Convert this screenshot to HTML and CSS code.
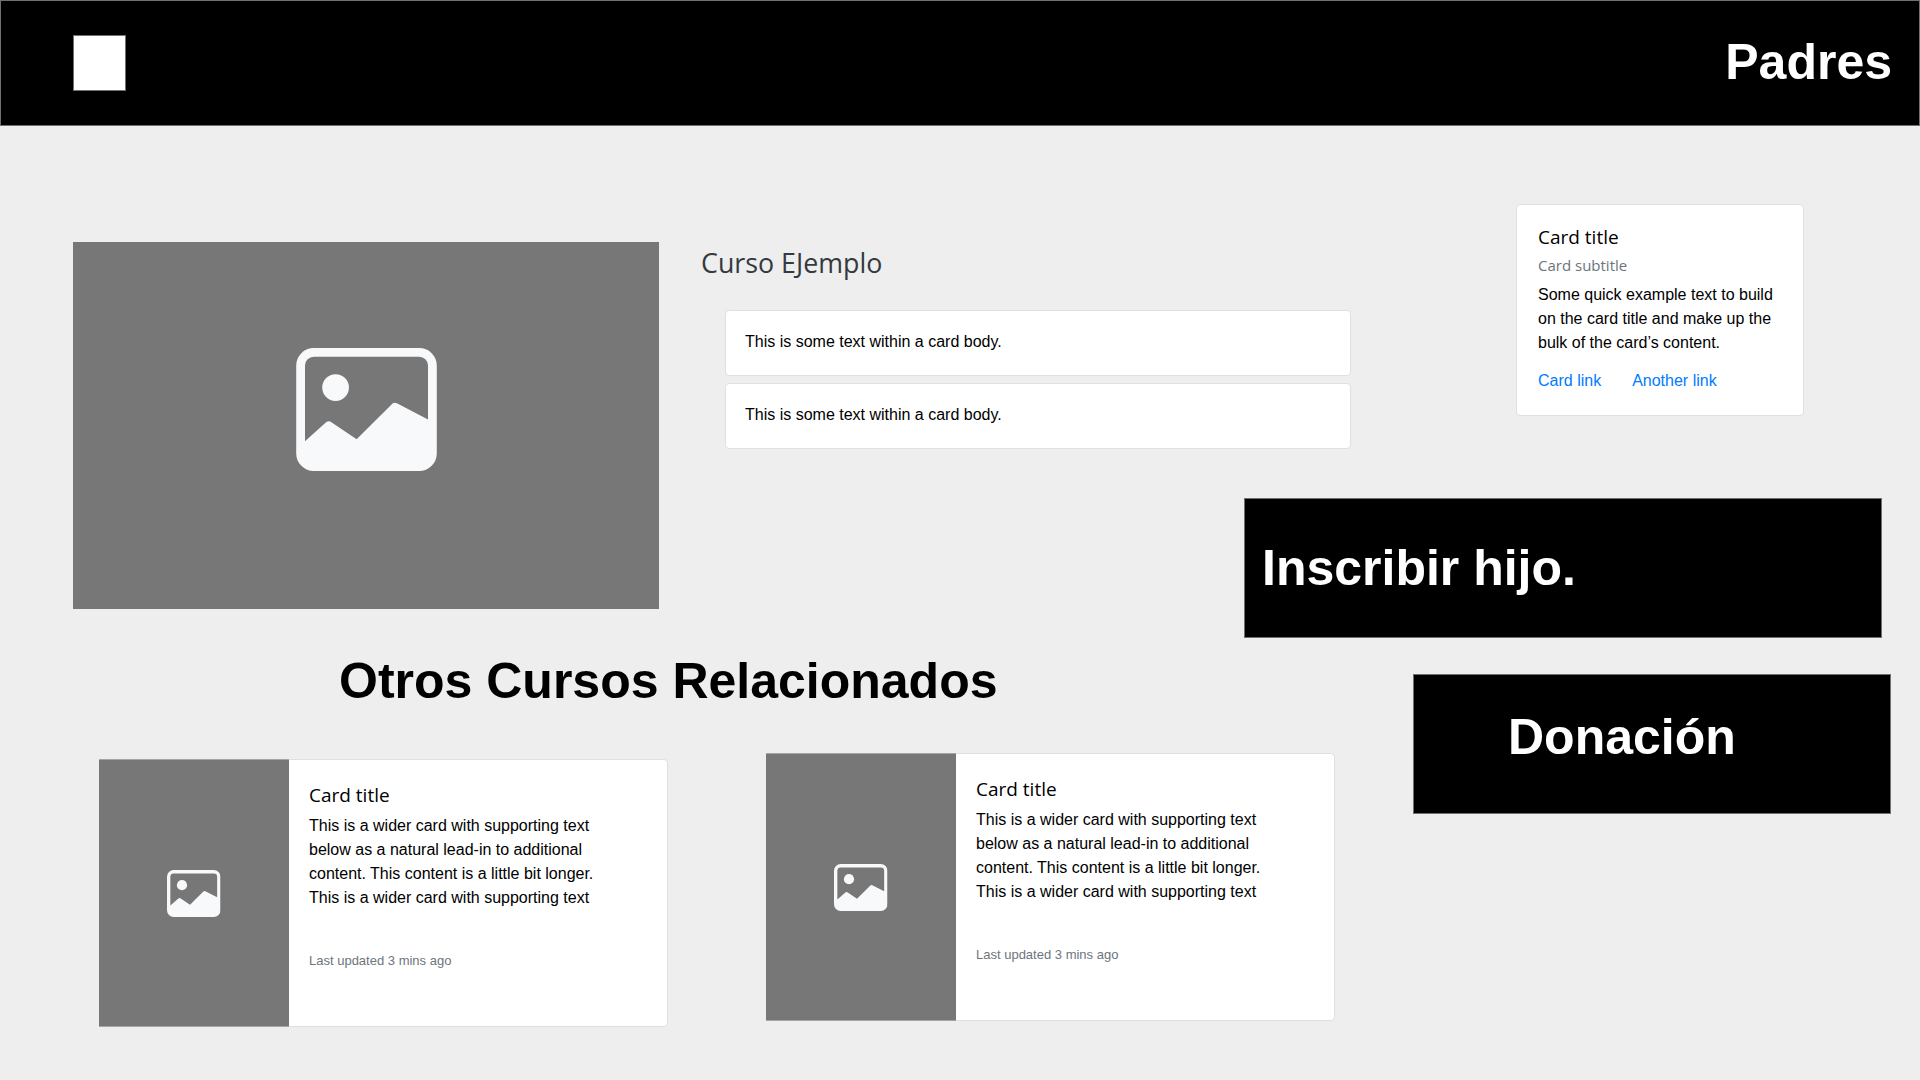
FILE: index.html
```html
<!DOCTYPE html>
<html lang="es">
<head>
<meta charset="utf-8">
<title>Curso EJemplo</title>
<link rel="stylesheet" href="styles.css">
</head>
<body>
<svg class="defs" aria-hidden="true">
  <symbol id="picture" viewBox="0 0 16 14">
    <path fill-rule="evenodd" d="M2 0h12a2 2 0 0 1 2 2v10a2 2 0 0 1-2 2H2a2 2 0 0 1-2-2V2a2 2 0 0 1 2-2zM2 1a1 1 0 0 0-1 1v8.62L3.4 8.46a.5.5 0 0 1 .6-.02L6.88 10.38 10.88 6.4a.5.5 0 0 1 .58-.1L15 8.14V2a1 1 0 0 0-1-1z"/>
    <circle cx="4.48" cy="4.5" r="1.52"/>
  </symbol>
</svg>
<header class="topbar">
  <div class="logo"></div>
  <div class="heading role">Padres</div>
</header>
<main class="page">
  <div class="content">
    <section class="course">
      <div class="cover"><svg class="cover-icon"><use href="#picture"/></svg></div>
      <div class="details">
        <h1 class="course-title">Curso EJemplo</h1>
        <div class="card note">This is some text within a card body.</div>
        <div class="card note">This is some text within a card body.</div>
      </div>
    </section>
    <h2 class="heading related-title">Otros Cursos Relacionados</h2>
    <section class="related">
      <article class="card wide">
        <div class="thumb"><svg class="thumb-icon"><use href="#picture"/></svg></div>
        <div class="wide-body">
          <h3 class="card-title">Card title</h3>
          <p class="text">This is a wider card with supporting text<br>below as a natural lead-in to additional<br>content. This content is a little bit longer.<br>This is a wider card with supporting text</p>
          <p class="updated">Last updated 3 mins ago</p>
        </div>
      </article>
      <article class="card wide raised">
        <div class="thumb"><svg class="thumb-icon"><use href="#picture"/></svg></div>
        <div class="wide-body">
          <h3 class="card-title">Card title</h3>
          <p class="text">This is a wider card with supporting text<br>below as a natural lead-in to additional<br>content. This content is a little bit longer.<br>This is a wider card with supporting text</p>
          <p class="updated">Last updated 3 mins ago</p>
        </div>
      </article>
    </section>
  </div>
  <aside class="side">
    <div class="card info">
      <h3 class="card-title">Card title</h3>
      <h4 class="subtitle">Card subtitle</h4>
      <p class="text">Some quick example text to build<br>on the card title and make up the<br>bulk of the card’s content.</p>
      <div class="links"><a>Card link</a><a>Another link</a></div>
    </div>
    <div class="heading action enroll">Inscribir hijo.</div>
    <div class="heading action donate">Donación</div>
  </aside>
</main>
</body>
</html>
```
FILE: styles.css
```css
* { box-sizing: border-box; }
body {
  margin: 0;
  height: 1080px;
  overflow: hidden;
  background: #eee;
  color: #000;
  font: 16px/24px "Liberation Sans", Arial, sans-serif;
}
h1, h2, h3, h4, p { margin: 0; font-weight: 400; }
.defs { display: none; }
.heading {
  font-size: 50px;
  line-height: 60px;
  font-weight: 700;
  white-space: nowrap;
}
.topbar {
  display: flex;
  justify-content: space-between;
  height: 126px;
  padding: 34px 27px 0 72px;
  border: 1px solid #707070;
  background: #000;
  color: #fff;
}
.logo {
  width: 53px;
  height: 56px;
  border: 1px solid #707070;
  background: #fff;
}
.role { margin-top: -3px; }
.page {
  display: grid;
  grid-template-columns: 1171px 647px;
  padding-left: 73px;
}
.content { width: 1278px; padding-top: 116px; }
.course { display: flex; gap: 43px; height: 367px; }
.cover {
  display: flex;
  align-items: center;
  justify-content: center;
  width: 586px;
  height: 367px;
  padding-bottom: 32px;
  background: #777;
}
.cover-icon { width: 141px; height: 123px; fill: #f8f9fa; }
.details { flex: 1; }
.course-title {
  height: 68px;
  padding-top: 4px;
  text-indent: -1px;
  font: 400 26.8px/34px "Open Sans", "Noto Sans", sans-serif;
  color: #343a40;
}
.card {
  border: 1px solid #dfdfdf;
  border-radius: 4px;
  background: #fff;
}
.note {
  height: 66px;
  margin: 0 0 7px 23px;
  padding: 19px;
}
.related-title { margin: 42px 0 0 266px; }
.related { display: flex; gap: 98px; margin: 48px 0 0 26px; }
.wide {
  display: flex;
  width: 569px;
  height: 268px;
}
.raised { margin-top: -6px; margin-bottom: 6px; }
.thumb {
  display: flex;
  align-items: center;
  justify-content: center;
  width: 190px;
  margin: -1px 0 -1px -1px;
  background: #777;
  border-top: 1px solid #a5a5a5;
  border-bottom: 1px solid #a5a5a5;
}
.thumb-icon { width: 53.5px; height: 47px; fill: #f8f9fa; }
.wide-body { padding: 21px 0 0 20px; }
.card-title { font: 400 19px/28px "Open Sans", "Noto Sans", sans-serif; }
.wide .card-title { margin-bottom: 5px; }
.updated { margin-top: 39px; font-size: 13px; color: #6c757d; }
.side { padding-top: 78px; color: #fff; }
.info {
  width: 288px;
  height: 212px;
  margin-left: 272px;
  padding: 18px 0 0 21px;
  color: #000;
}
.subtitle {
  margin: 2px 0 6px;
  font: 400 15px/24px "Open Sans", "Noto Sans", sans-serif;
  color: #6c757d;
}
.links { display: flex; gap: 31px; margin-top: 14px; color: #007bff; }
.action {
  height: 140px;
  border: 1px solid #707070;
  background: #000;
}
.enroll { width: 638px; margin-top: 82px; padding: 39px 0 0 17px; }
.donate { width: 478px; margin: 36px 0 0 169px; padding: 32px 0 0 94px; }
```
